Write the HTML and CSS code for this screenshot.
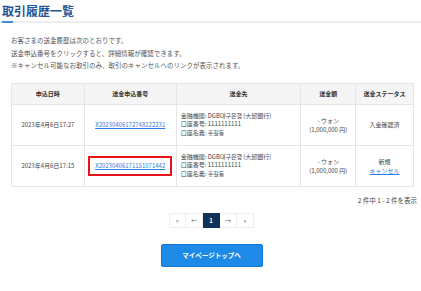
FILE: index.html
```html
<!DOCTYPE html>
<html>
<head>
  <meta charset="utf-8">
  <link rel="stylesheet" href="styles.css">
</head>
<body>
  <h1 class="title">取引履歴一覧</h1>
  <div class="content">
    <p class="lead">お客さまの送金履歴は次のとおりです。</p>
    <p class="lead">送金申込番号をクリックすると、詳細情報が確認できます。</p>
    <p class="lead note">※キャンセル可能なお取引のみ、取引のキャンセルへのリンクが表示されます。</p>

    <table class="history">
      <colgroup>
        <col class="c1"><col class="c2"><col class="c3"><col class="c4"><col class="c5">
      </colgroup>
      <tr class="head">
        <th>申込日時</th>
        <th>送金申込番号</th>
        <th>送金先</th>
        <th>送金額</th>
        <th>送金ステータス</th>
      </tr>
      <tr>
        <td>2023年4月6日17:27</td>
        <td><a href="#">X20230406172748122231</a></td>
        <td class="dest">金融機関: DGB대구은행 (大邱銀行)<br>口座番号: 1111111111<br>口座名義: 홍길동</td>
        <td>- ウォン<br>(1,000,000 円)</td>
        <td>入金確認済</td>
      </tr>
      <tr>
        <td>2023年4月6日17:15</td>
        <td><span class="mark"><a href="#">X20230406171151071442</a></span></td>
        <td class="dest">金融機関: DGB대구은행 (大邱銀行)<br>口座番号: 1111111111<br>口座名義: 홍길동</td>
        <td>- ウォン<br>(1,000,000 円)</td>
        <td>新規<br><a href="#">キャンセル</a></td>
      </tr>
    </table>

    <div class="count">2 件中 1 - 2 件を表示</div>

    <div class="pager">
      <span class="pg">«</span><span class="pg">←</span><span class="pg active">1</span><span class="pg">→</span><span class="pg">»</span>
    </div>

    <div class="actions">
      <button class="btn">マイページトップへ</button>
    </div>
  </div>
</body>
</html>
```

FILE: styles.css
```css
body { margin: 0; padding: 0; font-family: "Noto Sans CJK JP", "Noto Sans", sans-serif; color: #444; background: #fff; }
.title { margin: 0; padding: 3px 2px 0; height: 18px; font-size: 12px; line-height: 16px; font-weight: bold; color: #1f5596; border-bottom: 2px solid #eeeeee; position: relative; }
.title::after { content: ""; position: absolute; left: 2px; bottom: -2px; width: 11px; height: 2px; background: #3a8fd8; }
.content { padding: 11px 7px 0 11px; }
.lead { margin: 0; font-size: 6.5px; line-height: 12.5px; color: #555; padding-left: 0; }
.note { color: #555; }
.history { margin-top: 11px; width: 403px; border-collapse: collapse; font-size: 6px; color: #444; }
.history col.c1 { width: 73px; }
.history col.c2 { width: 92px; }
.history col.c3 { width: 125px; }
.history col.c4 { width: 55px; }
.history col.c5 { width: 58px; }
.history th, .history td { border: 1px solid #e6e6e6; text-align: center; vertical-align: middle; padding: 0; line-height: 9px; }
.history th { background: #f5f5f5; height: 20px; font-weight: bold; color: #333; }
.history td { height: 40px; }
.history td.dest { text-align: left; padding-left: 4px; line-height: 8.6px; }
.history a { color: #2a7de1; text-decoration: underline; }
.mark { display: inline-block; border: 2px solid #e8141a; padding: 4px 5px 4px 5px; line-height: 8px; }
.count { text-align: right; font-size: 6.5px; margin-top: 9px; margin-right: -3px; color: #444; line-height: 8px; }
.pager { display: flex; justify-content: center; margin-top: 9px; margin-left: -2px; }
.pg { width: 17px; height: 15px; border: 1px solid #eee; border-left: none; box-sizing: border-box; display: flex; align-items: center; justify-content: center; font-size: 6px; color: #666; }
.pg:first-child { border-left: 1px solid #eee; }
.pg.active { background: #0f3358; color: #fff; font-weight: bold; border-color: #0f3358; }
.actions { display: flex; justify-content: center; margin-top: 16px; margin-left: -2px; }
.btn { width: 102px; height: 23px; background: #1e8ae8; border: 1px solid #1478d0; border-radius: 2px; color: #fff; font-family: inherit; font-size: 6.5px; font-weight: bold; padding: 0; }
```
